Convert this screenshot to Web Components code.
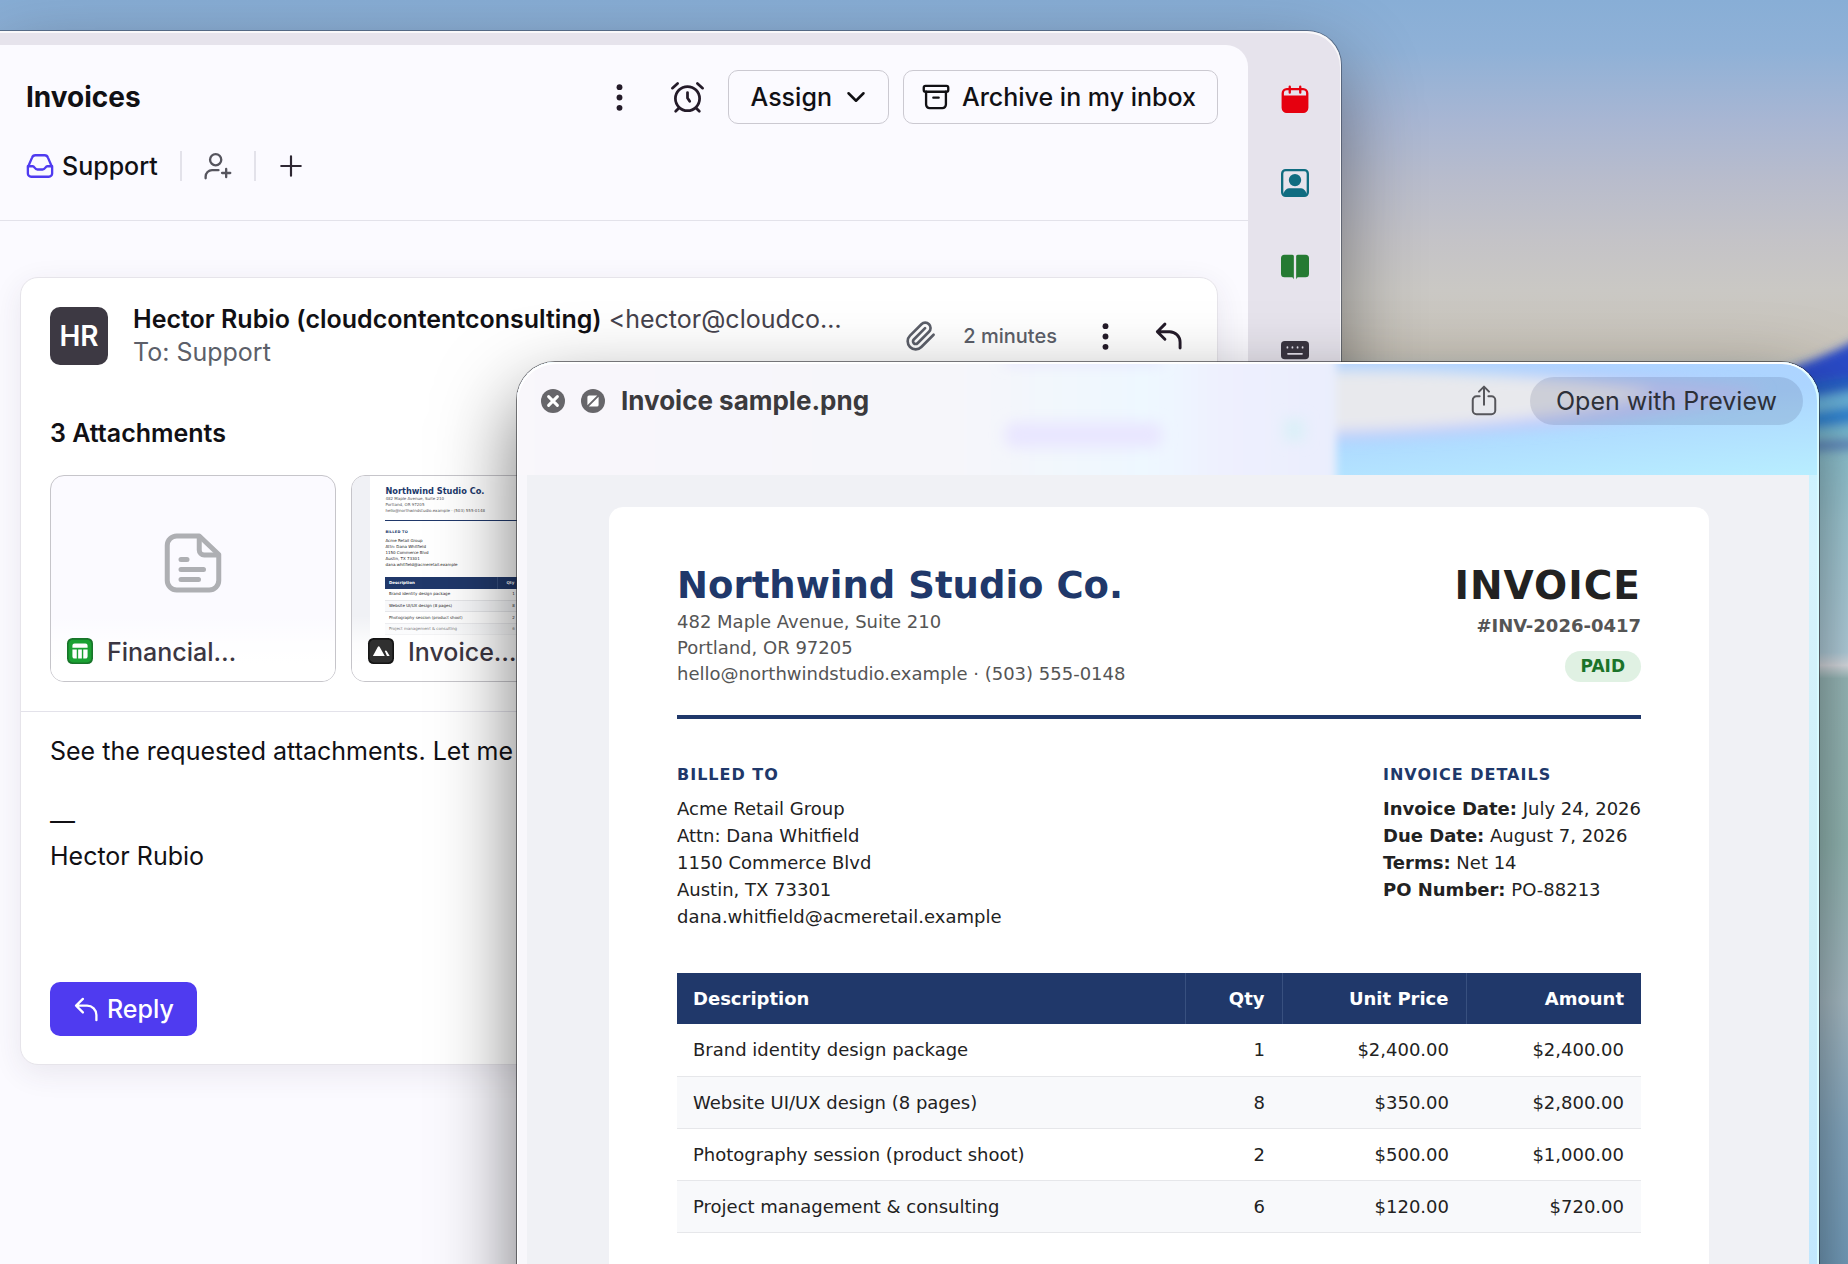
<!DOCTYPE html>
<html lang="en">
<head>
<meta charset="utf-8">
<title>Invoices</title>
<style>
    * { box-sizing: border-box; }

    body {
        margin: 0;
        height: 100vh;
        overflow: hidden;
        font-family: Inter, "Liberation Sans", sans-serif;
        color: #111014;
    }
</style>
</head>
<body>

<desktop-scene>
    <mail-window slot="back">
        <conversation-header slot="main" heading="Invoices"></conversation-header>
        <message-card slot="main"></message-card>
    </mail-window>
    <preview-window slot="front" heading="Invoice sample.png">
        <invoice-sheet></invoice-sheet>
    </preview-window>
</desktop-scene>

<script>
const ICONS = {
    dots: `<g fill="currentColor" stroke="none"><circle cx="12" cy="2.8" r="2.6"/><circle cx="12" cy="12" r="2.6"/><circle cx="12" cy="21.2" r="2.6"/></g>`,
    alarm: `<circle cx="12" cy="12.8" r="8.8"/><path d="M12 8.4v4l1.600 2.400M1 5.200l3.800-3.400M23 5.200l-3.800-3.400M5.800 19.600l-2.400 2.400M18.200 19.600l2.400 2.400"/>`,
    chevron: `<path d="M3 7.500l9 9 9-9"/>`,
    archive: `<rect x="1.5" y="2.5" width="21" height="5" rx="1.5"/><path d="M3.5 7.5v11a3 3 0 0 0 3 3h11a3 3 0 0 0 3-3v-11M9.7 12.6h4.6"/>`,
    inbox: `<path d="M5.2 4.8A3 3 0 0 1 8 2.8h8a3 3 0 0 1 2.8 2L22.4 13v5.4a2.8 2.8 0 0 1-2.8 2.8H4.4a2.8 2.8 0 0 1-2.8-2.8V13z"/><path d="M1.6 12.2h4.2c1.6 0 1.6 2.8 4 2.8h4.4c2.4 0 2.4-2.8 4-2.8h4.2"/>`,
    personAdd: `<circle cx="10" cy="6.6" r="4.8"/><path d="M1.4 22.5v-1.500a5.500 5.500 0 0 1 5.500-5.500h5.500M19 14.500v7M15.500 18h7"/>`,
    plus: `<path d="M12 3v18M3 12h18"/>`,
    clip: `<path d="m21.44 11.05-9.19 9.19a6 6 0 0 1-8.49-8.49l8.57-8.57A4 4 0 1 1 18 8.84l-8.59 8.57a2 2 0 0 1-2.83-2.83l8.49-8.48"/>`,
    reply: `<path d="M8.5 1.800L2 8.300l6.500 6.500M2 8.300h10.500a9 9 0 0 1 9 9v5"/>`,
    calendar: `<rect x="1.5" y="3.5" width="21" height="19.5" rx="3.5" fill="none" stroke-width="2"/><path fill="currentColor" stroke="none" d="M1.5 9h21v11a3.5 3.5 0 0 1-3.5 3.5H5A3.5 3.5 0 0 1 1.5 20z"/><path d="M7.5 1.500v5M16.500 1.500v5"/>`,
    contact: `<rect x="1" y="1" width="22" height="22" rx="3"/><g fill="currentColor" stroke="none"><circle cx="12" cy="9.5" r="5.3"/><path d="M2 21.500c1-4 3.500-5 5.500-5h9c2 0 4.500 1 5.500 5v1.500H2z"/></g>`,
    book: `<path fill="currentColor" stroke="none" d="M3 1.500h6.500a2 2 0 0 1 1.500 .8v20.200c-.6-1.300-1-1.800-2-1.800H3a3 3 0 0 1-3-3V4.500a3 3 0 0 1 3-3zM21 1.500h-6.500a2 2 0 0 0-1.500 .8v20.200c.6-1.300 1-1.800 2-1.800H21a3 3 0 0 0 3-3V4.500a3 3 0 0 0-3-3z"/>`,
    keyboard: `<rect x="0" y="3.500" width="24" height="15.500" rx="3.200" fill="currentColor" stroke="none"/><g stroke="#e5e1ec" stroke-width="1.500"><path d="M5.500 8.600v.600M9.800 8.600v.600M14.200 8.600v.600M18.500 8.600v.600M6 14.400h12"/></g>`,
    page: `<path d="M14.5 1.2H5.500a3.800 3.800 0 0 0-3.800 3.800v14a3.800 3.800 0 0 0 3.800 3.800h13a3.800 3.800 0 0 0 3.800-3.800V8.600z"/><path d="M14.500 1.600v5.200a2 2 0 0 0 2 2h5.200M7.200 10.600h2.400M7.200 14.600h9M7.200 18.600h7"/>`,
    sheet: `<rect width="24" height="24" rx="5" fill="#18752a" stroke="none"/><rect x="1.5" y="1.5" width="21" height="21" rx="4" fill="#1ba133" stroke="none"/><path fill="#fff" stroke="none" d="M7 5h10a2 2 0 0 1 2 2v2H5V7a2 2 0 0 1 2-2zM5 10.500h4V19H7a2 2 0 0 1-2-2zM10.300 10.500h3.400V19h-3.400zM15 10.500h4V17a2 2 0 0 1-2 2h-2z"/>`,
    image: `<rect width="24" height="24" rx="5" fill="#151515" stroke="none"/><rect x="1.5" y="1.5" width="21" height="21" rx="4" fill="#303030" stroke="none"/><path fill="#fff" stroke="none" d="M4.500 16.500L9 8.200c.5-.9 1.300-.9 1.800 0l4.700 8.300zM15.500 12c.8-.9 1.400-.5 1.900 .2l2.600 4.300h-2.500z"/>`,
    close: `<circle cx="12" cy="12" r="12" fill="#67666a" stroke="none"/><path stroke="#fff" stroke-width="3" d="M7.6 7.6l8.800 8.800M16.400 7.600l-8.800 8.800"/>`,
    expand: `<circle cx="12" cy="12" r="12" fill="#67666a" stroke="none"/><path fill="#fff" stroke="none" d="M8 6.400h8.200L6.400 16.200V8A1.600 1.600 0 0 1 8 6.400zM16 17.600H7.800l9.800-9.800V16a1.600 1.600 0 0 1-1.600 1.600z"/>`,
    share: `<path d="M8.500 8.200H6a3 3 0 0 0-3 3v8.300a3 3 0 0 0 3 3h12a3 3 0 0 0 3-3v-8.300a3 3 0 0 0-3-3h-2.500M12 15V.500M8 4.500l4-4 4 4"/>`
};

class BaseElement extends HTMLElement {
    constructor() {
        super();
        this.attachShadow({ mode: "open" });
    }

    connectedCallback() {
        this.shadowRoot.innerHTML = `
        <style>
            *, :host { box-sizing: border-box; }
            button {
                font: inherit;
                color: inherit;
                background: none;
                border: 0;
                padding: 0;
                display: flex;
                align-items: center;
                cursor: pointer;
            }
            h1, h2, p { margin: 0; }
        </style>
        ${this.render()}`;
    }
}

class UiIcon extends BaseElement {
    render() {
        const weight = this.getAttribute("weight") || 2;
        return `
        <style>
            :host {
                display: block;
                flex: none;
                width: var(--size, 28px);
                height: var(--size, 28px);
            }
            svg { display: block; width: 100%; height: 100%; overflow: visible; }
        </style>
        <svg viewBox="0 0 24 24" fill="none" stroke="currentColor" stroke-width="${weight}"
             stroke-linecap="round" stroke-linejoin="round" aria-hidden="true">${ICONS[this.getAttribute("name")]}</svg>`;
    }
}

class DesktopScene extends BaseElement {
    render() {
        return `
        <style>
            :host {
                display: block;
                position: relative;
                height: 100%;
                overflow: hidden;
                background: linear-gradient(#88aed6, #8fb1d7 50px, #a8b6d3 120px, #b8bccc 180px,
                    #c4c3c7 240px, #cac8c4 290px, #c9c4ba 350px, #93bccb 480px);
            }
            .wallpaper {
                position: absolute;
                right: 0;
                top: 0;
                width: 160px;
                height: 100%;
            }
            ::slotted([slot="back"]) { position: absolute; inset: 31px 507px -80px 0; isolation: isolate; }
            ::slotted([slot="front"]) { position: absolute; inset: 362px 29px -60px 517px; isolation: isolate; }
        </style>
        <svg class="wallpaper" viewBox="0 0 160 1264" preserveAspectRatio="none" aria-hidden="true">
            <defs>
                <linearGradient id="sea" x1="0" y1="0" x2="0" y2="1">
                    <stop offset="0" stop-color="#84c4d4"/>
                    <stop offset=".15" stop-color="#a8d4e0"/>
                    <stop offset=".3" stop-color="#bcdae8"/>
                    <stop offset=".315" stop-color="#e4e8ee"/>
                    <stop offset=".33" stop-color="#a2c4c4"/>
                    <stop offset=".52" stop-color="#9cc2be"/>
                    <stop offset=".7" stop-color="#b0c6d0"/>
                    <stop offset=".85" stop-color="#8cb2cc"/>
                    <stop offset="1" stop-color="#7aa6c6"/>
                </linearGradient>
                <filter id="soft" x="-20%" y="-20%" width="140%" height="140%"><feGaussianBlur stdDeviation="5"/></filter>
            </defs>
            <path fill="url(#sea)" d="M0 400L170 390V1264H0z"/>
            <g filter="url(#soft)">
                <path fill="#2c4cc8" d="M30 388Q110 372 180 334V400L0 430z"/>
                <path fill="#2860c4" d="M60 392L180 374V394L60 410z"/>
                <path fill="#68b2dc" d="M60 410L180 388V402L60 420z"/>
                <path fill="#3088d8" d="M60 422L180 404V424L60 434z"/>
                <path fill="#7cc2dc" d="M60 436H180V422z"/>
                <path fill="#6490c8" d="M60 444L180 438V449L60 454z"/>
            </g>
        </svg>
        <slot name="back"></slot>
        <slot name="front"></slot>`;
    }
}

class MailWindow extends BaseElement {
    render() {
        return `
        <style>
            :host {
                display: flex;
                padding-top: 14px;
                background: #e6e3ec;
                border-radius: 0 34px 0 0;
                box-shadow: 0 0 0 1px rgba(40,50,70,.5), inset -1px 2px 0 rgba(255,255,255,.75),
                    0 30px 80px rgba(0,0,0,.42);
            }
            main {
                flex: 1;
                min-width: 0;
                background: #fbfaff;
                border-radius: 0 22px 0 0;
            }
            nav {
                width: 93px;
                padding-top: 40px;
                display: flex;
                flex-direction: column;
                align-items: center;
                gap: 56px;
            }
        </style>
        <main><slot name="main"></slot></main>
        <nav aria-label="Apps">
            <button aria-label="Calendar" style="color:#e6000f"><ui-icon name="calendar"></ui-icon></button>
            <button aria-label="Contacts" style="color:#0f6c80"><ui-icon name="contact"></ui-icon></button>
            <button aria-label="Knowledge" style="color:#257a32"><ui-icon name="book"></ui-icon></button>
            <button aria-label="Shortcuts" style="color:#3b3642"><ui-icon name="keyboard"></ui-icon></button>
        </nav>`;
    }
}

class ConversationHeader extends BaseElement {
    render() {
        return `
        <style>
            :host {
                display: block;
                padding: 25px 30px 39px 26px;
                border-bottom: 1px solid #e3e2ea;
            }
            .bar, .tags { display: flex; align-items: center; }
            .tags { margin-top: 27px; height: 30px; font-size: 25px; font-weight: 500; --size: 28px; }
            h1 { flex: 1; font-size: 28px; line-height: 36px; font-weight: 700; }
            .icon { color: #241b29; margin-right: 24px; --size: 33px; }
            .icon.more { margin-right: 38px; --size: 27px; }
            .boxed {
                height: 54px;
                padding: 0 22px;
                gap: 14px;
                border: 1px solid #cbc9d1;
                border-radius: 10px;
                font-size: 25px;
                font-weight: 500;
                --size: 20px;
            }
            .boxed + .boxed { margin-left: 14px; padding: 0 21px 0 18px; gap: 12px; --size: 28px; }
            .tag { gap: 8px; }
            .tag ui-icon { color: #4f3bf0; }
            .rule { width: 2px; height: 30px; background: #e3e2ea; margin: 0 22px; }
        </style>
        <div class="bar">
            <h1>${this.getAttribute("heading")}</h1>
            <button class="icon more" aria-label="More"><ui-icon name="dots"></ui-icon></button>
            <button class="icon" aria-label="Snooze"><ui-icon name="alarm"></ui-icon></button>
            <button class="boxed">Assign <ui-icon name="chevron" weight="3"></ui-icon></button>
            <button class="boxed"><ui-icon name="archive"></ui-icon> Archive in my inbox</button>
        </div>
        <div class="tags">
            <button class="tag"><ui-icon name="inbox"></ui-icon>Support</button>
            <span class="rule"></span>
            <button aria-label="Add participant" style="color:#56555e"><ui-icon name="personAdd"></ui-icon></button>
            <span class="rule"></span>
            <button aria-label="Add tag" style="--size:26px;color:#2e2733"><ui-icon name="plus"></ui-icon></button>
        </div>`;
    }
}

class MessageCard extends BaseElement {
    render() {
        return `
        <style>
            :host {
                display: block;
                margin: 56px 30px 0 20px;
                background: #fff;
                border: 1px solid #e6e4ea;
                border-radius: 18px;
                box-shadow: 0 8px 30px rgba(60,40,80,.09);
                font-size: 25px;
            }
            header { display: flex; align-items: center; padding: 25px 34px 0 29px; }
            .avatar {
                flex: none;
                width: 58px;
                height: 58px;
                border-radius: 10px;
                background: #3d3943;
                color: #fff;
                display: grid;
                place-items: center;
                font-size: 28px;
                font-weight: 600;
            }
            .who { flex: 1; min-width: 0; margin-left: 25px; line-height: 33px; }
            .who p { white-space: nowrap; overflow: hidden; text-overflow: ellipsis; }
            .who b { font-weight: 600; }
            .who span { color: #45424c; }
            .who .to { color: #5c5f69; }
            .meta { display: flex; align-items: center; color: #5c5f69; }
            time { font-size: 20px; font-weight: 500; margin: 0 35px 0 26px; }
            .meta button { color: #241b29; --size: 27px; margin-right: 36px; }
            .meta button:last-child { --size: 28px; margin: 0; }
            .files { padding: 48px 29px 29px; border-bottom: 1px solid #e3e2ea; }
            h2 { font-size: 25px; line-height: 32px; font-weight: 600; }
            .tiles {
                display: grid;
                grid-template-columns: repeat(auto-fill, 286px);
                gap: 15px;
                margin-top: 26px;
            }
            .body { padding: 22px 29px 28px; line-height: 35px; }
            .reply {
                margin-top: 108px;
                height: 54px;
                padding: 0 23px 0 24px;
                gap: 8px;
                border-radius: 10px;
                background: #4f3bf0;
                color: #fff;
                font-weight: 500;
                --size: 25px;
            }
        </style>
        <header>
            <div class="avatar">HR</div>
            <div class="who">
                <p><b>Hector Rubio (cloudcontentconsulting)</b> <span>&lt;hector@cloudco…</span></p>
                <p class="to">To: Support</p>
            </div>
            <div class="meta">
                <ui-icon name="clip" style="--size:32px"></ui-icon>
                <time>2 minutes</time>
                <button aria-label="More"><ui-icon name="dots"></ui-icon></button>
                <button aria-label="Reply"><ui-icon name="reply" weight="2.5"></ui-icon></button>
            </div>
        </header>
        <section class="files">
            <h2>3 Attachments</h2>
            <div class="tiles">
                <attachment-tile icon="sheet">
                    <ui-icon slot="thumb" name="page" style="--size:60px;color:#aeafb3;margin:57px auto"></ui-icon>
                    Financial…
                </attachment-tile>
                <attachment-tile icon="image">
                    <invoice-sheet slot="thumb" style="zoom:.2227;margin-top:-44px"></invoice-sheet>
                    Invoice…
                </attachment-tile>
            </div>
        </section>
        <section class="body">
            <p>See the requested attachments. Let me</p>
            <br>
            <p>—</p>
            <p>Hector Rubio</p>
            <button class="reply"><ui-icon name="reply" weight="2.2"></ui-icon>Reply</button>
        </section>`;
    }
}

class AttachmentTile extends BaseElement {
    render() {
        return `
        <style>
            :host { display: block; }
            a {
                display: grid;
                height: 207px;
                border: 1px solid #c6c5ca;
                border-radius: 14px;
                background: #fbfaff;
                overflow: hidden;
                color: #3b3642;
                text-decoration: none;
                font-weight: 500;
            }
            .thumb, .label { grid-area: 1 / 1; min-width: 0; min-height: 0; }
            .label {
                z-index: 1;
                display: flex;
                align-items: flex-end;
                gap: 14px;
                padding: 0 16px 13px;
                line-height: 32px;
                background: linear-gradient(rgba(255,255,255,0) 68%, rgba(255,255,255,.8) 82%, #fff 92%);
                --size: 26px;
            }
            .label ui-icon { margin-bottom: 4px; }
        </style>
        <a href="#">
            <div class="thumb"><slot name="thumb"></slot></div>
            <div class="label"><ui-icon name="${this.getAttribute("icon")}"></ui-icon><span><slot></slot></span></div>
        </a>`;
    }
}

class PreviewWindow extends BaseElement {
    render() {
        return `
        <style>
            :host {
                display: flex;
                flex-direction: column;
                padding: 0 10px;
                border-radius: 38px 38px 0 0;
                background:
                    linear-gradient(90deg, #f8f7fb 50%, transparent 50%),
                    linear-gradient(#c0f0ff, #d6f3fd 20%, #cceef6 60%, #c0e6ff);
                box-shadow: 0 0 0 1px rgba(40,40,45,.6), 0 34px 80px rgba(0,0,0,.55);
            }
            .glass {
                position: absolute;
                inset: 0 0 auto 0;
                width: 100%;
                height: 113px;
                border-radius: 38px 38px 0 0;
            }
            .shine {
                position: absolute;
                inset: 0;
                border-radius: inherit;
                box-shadow: inset 1px 2px 0 #fff, inset -2px 1px 0 #d8fbff;
                pointer-events: none;
            }
            header {
                position: relative;
                display: flex;
                align-items: center;
                height: 113px;
                padding: 14px 6px 50px 14px;
                --size: 24px;
            }
            h1 { flex: 1; margin-left: 16px; font-size: 26px; line-height: 32px; font-weight: 700; color: #3b3a3d; }
            header button + button { margin-left: 16px; }
            header .share { color: #56565b; --size: 30px; }
            header .open {
                height: 48px;
                padding: 0 26px;
                margin-left: 31px;
                border-radius: 24px;
                background: rgba(40,50,90,.14);
                color: #2d3038;
                font-size: 25px;
            }
            .page { position: relative; flex: 1; min-height: 0; overflow: hidden; background: #f0f1f5; }
        </style>
        <svg class="glass" viewBox="0 0 1303 113" preserveAspectRatio="none" aria-hidden="true">
            <defs>
                <linearGradient id="pale">
                    <stop offset="0" stop-color="#f9f7fb"/>
                    <stop offset=".55" stop-color="#f6f6fa"/>
                    <stop offset=".78" stop-color="#eef8ff"/>
                    <stop offset=".87" stop-color="#eef0fe"/>
                    <stop offset="1" stop-color="#eaeefd"/>
                </linearGradient>
                <linearGradient id="blue" x1="0" y1="0" x2="1" y2="1">
                    <stop offset="0" stop-color="#b4cdff"/>
                    <stop offset=".6" stop-color="#acd5ff"/>
                    <stop offset="1" stop-color="#b8eeff"/>
                </linearGradient>
                <filter id="haze" x="-20%" y="-60%" width="140%" height="220%"><feGaussianBlur stdDeviation="7"/></filter>
                <filter id="edge" x="-5%" y="-40%" width="110%" height="180%"><feGaussianBlur stdDeviation="4"/></filter>
            </defs>
            <rect width="1303" height="113" fill="url(#blue)"/>
            <g filter="url(#haze)">
                <path fill="#c2ccfb" d="M800 14Q1100 6 1250 30Q1120 68 800 78z"/>
                <path fill="#e8e9ed" d="M800 8Q980 6 1140 30Q1050 62 800 70z"/>
            </g>
            <rect x="-40" y="-40" width="860" height="200" fill="url(#pale)" filter="url(#edge)"/>
            <g filter="url(#haze)">
                <rect x="488" y="60" width="158" height="26" rx="10" fill="#e9e6ff"/>
                <rect x="488" y="-6" width="158" height="8" fill="#e4e1ff"/>
                <rect x="768" y="57" width="20" height="22" fill="#daf0f8"/>
            </g>
        </svg>
        <header>
            <button aria-label="Close"><ui-icon name="close"></ui-icon></button>
            <button aria-label="Full screen"><ui-icon name="expand"></ui-icon></button>
            <h1>${this.getAttribute("heading")}</h1>
            <button class="share" aria-label="Share"><ui-icon name="share" weight="1.6"></ui-icon></button>
            <button class="open">Open with Preview</button>
        </header>
        <div class="page"><slot></slot></div>
        <div class="shine"></div>`;
    }
}

class InvoiceSheet extends BaseElement {
    render() {
        const items = [
            ["Brand identity design package", "1", "$2,400.00", "$2,400.00"],
            ["Website UI/UX design (8 pages)", "8", "$350.00", "$2,800.00"],
            ["Photography session (product shoot)", "2", "$500.00", "$1,000.00"],
            ["Project management &amp; consulting", "6", "$120.00", "$720.00"]
        ];

        return `
        <style>
            :host {
                display: block;
                padding: 32px 100px 0 82px;
                background: #f0f1f5;
                color: #222;
                font-family: "DejaVu Sans", sans-serif;
                font-size: 18px;
                font-weight: 400;
                line-height: 27px;
            }
            article {
                min-height: 860px;
                padding: 55px 68px;
                background: #fff;
                border-radius: 14px 14px 0 0;
            }
            .top, .parties { display: flex; justify-content: space-between; }
            .top { padding-bottom: 28px; border-bottom: 4px solid #20386a; }
            .from { color: #555; line-height: 26px; }
            h1 { font-size: 37px; line-height: 47px; color: #20386a; }
            .doc { display: flex; flex-direction: column; align-items: flex-end; line-height: 26px; }
            .doc h1 { font-size: 39px; color: #222; letter-spacing: 1px; }
            .doc b { margin-top: 4px; color: #555; }
            .paid {
                margin-top: 12px;
                padding: 0 16px;
                border-radius: 16px;
                background: #e0f1e3;
                color: #1b7329;
                font-size: 17px;
                font-weight: 700;
                line-height: 31px;
            }
            .parties { margin: 44px 0 43px; }
            h2 { font-size: 16px; line-height: 24px; margin-bottom: 8px; color: #20386a; letter-spacing: 1px; }
            table { width: 100%; border-collapse: collapse; table-layout: fixed; }
            th, td { height: 52px; padding: 0 17px 0 16px; text-align: right; border-bottom: 1px solid #e6e7ea; }
            th { height: 51px; background: #20386a; color: #fff; border: 0; }
            th + th { border-left: 1px solid #38507f; }
            th:first-child, td:first-child { text-align: left; }
            th:nth-child(2) { width: 97px; }
            th:nth-child(3) { width: 184px; }
            th:nth-child(4) { width: 175px; }
            tbody tr:nth-child(even) { background: #f8f9fb; }
        </style>
        <article>
            <div class="top">
                <div class="from">
                    <h1>Northwind Studio Co.</h1>
                    <p>482 Maple Avenue, Suite 210</p>
                    <p>Portland, OR 97205</p>
                    <p>hello@northwindstudio.example · (503) 555-0148</p>
                </div>
                <div class="doc">
                    <h1>INVOICE</h1>
                    <b>#INV-2026-0417</b>
                    <span class="paid">PAID</span>
                </div>
            </div>
            <div class="parties">
                <div>
                    <h2>BILLED TO</h2>
                    <p>Acme Retail Group</p>
                    <p>Attn: Dana Whitfield</p>
                    <p>1150 Commerce Blvd</p>
                    <p>Austin, TX 73301</p>
                    <p>dana.whitfield@acmeretail.example</p>
                </div>
                <div>
                    <h2>INVOICE DETAILS</h2>
                    <p><b>Invoice Date:</b> July 24, 2026</p>
                    <p><b>Due Date:</b> August 7, 2026</p>
                    <p><b>Terms:</b> Net 14</p>
                    <p><b>PO Number:</b> PO-88213</p>
                </div>
            </div>
            <table>
                <thead><tr><th>Description</th><th>Qty</th><th>Unit Price</th><th>Amount</th></tr></thead>
                <tbody>
                    ${items.map(row => `<tr>${row.map(cell => `<td>${cell}</td>`).join("")}</tr>`).join("")}
                </tbody>
            </table>
        </article>`;
    }
}

customElements.define("ui-icon", UiIcon);
customElements.define("desktop-scene", DesktopScene);
customElements.define("mail-window", MailWindow);
customElements.define("conversation-header", ConversationHeader);
customElements.define("message-card", MessageCard);
customElements.define("attachment-tile", AttachmentTile);
customElements.define("preview-window", PreviewWindow);
customElements.define("invoice-sheet", InvoiceSheet);
</script>
</body>
</html>
